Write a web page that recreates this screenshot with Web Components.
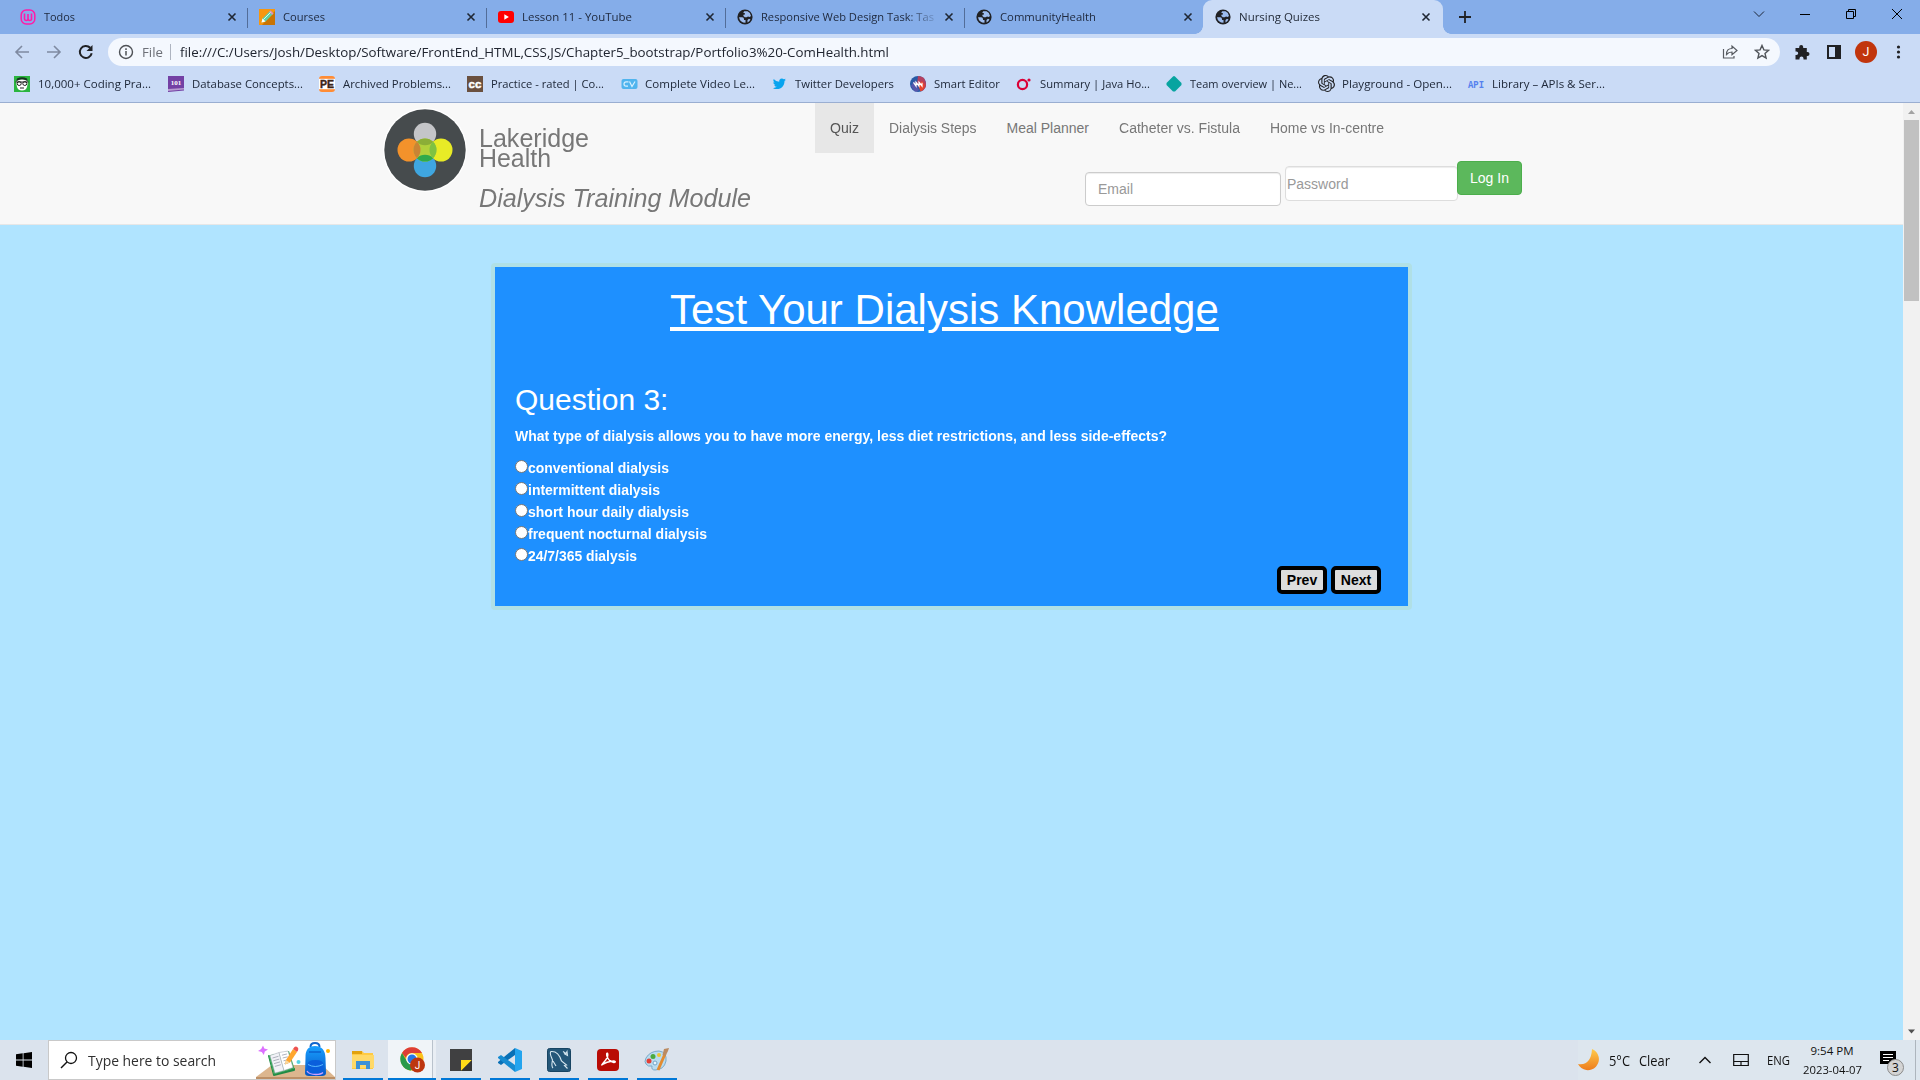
<!DOCTYPE html>
<html lang="en">
<head>
<meta charset="utf-8">
<title>Nursing Quizes</title>
<style>
html,body{margin:0;height:100%;overflow:hidden}
body{width:1920px;height:1080px;display:flex;flex-direction:column;background:#b0e4ff;font-family:"Liberation Sans",Arial,sans-serif}
</style>
</head>
<body>
<tab-strip></tab-strip>
<tool-bar></tool-bar>
<bookmark-bar></bookmark-bar>
<page-view>
  <site-nav></site-nav>
  <quiz-card heading="Test Your Dialysis Knowledge" question="Question 3:">
    <span slot="prompt"><fit-text t="What type of dialysis allows you to have more energy, less diet restrictions, and less side-effects?" w="652"></fit-text></span>
    <quiz-option t="conventional dialysis" w="141"></quiz-option>
    <quiz-option t="intermittent dialysis" w="132"></quiz-option>
    <quiz-option t="short hour daily dialysis" w="161"></quiz-option>
    <quiz-option t="frequent nocturnal dialysis" w="179"></quiz-option>
    <quiz-option t="24/7/365 dialysis" w="109"></quiz-option>
  </quiz-card>
</page-view>
<task-bar></task-bar>
<script>
const UI = '"Open Sans","Noto Sans",sans-serif';
const define = (name, render, after) => customElements.define(name, class extends HTMLElement {
  constructor(){ super(); this.attachShadow({mode:'open'}); }
  connectedCallback(){
    if (this.shadowRoot.firstChild) return;
    this.shadowRoot.innerHTML = render(k => this.getAttribute(k) || '');
    if (after) after(this);
  }
});
const svg = (w, h, body, vb) => `<svg width="${w}" height="${h}" viewBox="${vb || `0 0 ${w} ${h}`}" fill="none">${body}</svg>`;

const globe = svg(16,16,'<circle cx="8" cy="8" r="7.600" fill="#202124"/><path d="M2 8.200h3.200q1.800.1 1.800 1.900v.9h1.500v2.800Q3 13.600 2 8.200zM7.200 2.200h3.300q3 1.300 3.500 4.800l-1.300 1-1.700-.6-1.400.8H7.800L6.400 7V5.800l1.500-.2V4.200l-1.700-.5zM10.500 11l1.500-1.200 1.500.7q-1 2.200-3 3z" fill="#9dbcee"/>');
const ICON = {
  todo: svg(16,16,'<rect x="1.200" y="1" width="13.600" height="14" rx="5" stroke="#ff1ba8" stroke-width="1.500"/><path d="M4.500 4.500v5q0 2 1.800 2T8 9.500V5v4.500q0 2 1.800 2t1.700-2v-5" stroke="#ff1ba8" stroke-width="1.600"/>'),
  pencil: svg(16,16,'<path d="M0 0h16v16H0z" fill="#f7960f"/><path d="M16 2v14H3z" fill="#c97404"/><path d="m3.500 9.500 8-8 3 3-8 8-4 1z" fill="#5fd0a6"/><path d="m11.500 1.500 3 3-1.300 1.300-3-3z" fill="#e58ec0"/><path d="m4.500 10.500 7-7" stroke="#d9f8e8"/><path d="m3.500 9.500 3 3-4 1z" fill="#fff"/>'),
  yt: svg(16,16,'<rect y="2" width="16" height="12" rx="3" fill="#f00"/><path d="m6.300 5.300 4.600 2.700-4.600 2.700z" fill="#fff"/>'),
  globe,
  geek: svg(16,16,'<path d="M0 0h16v16H0z" fill="#2bb53f"/><path d="M2 6q1-4 6-4t6 4l-1 5q-1 3.500-5 3.500T3 11z" fill="#fff"/><path d="M2 6q1.500-2.500 6-2.500T14 6l-1-3.500Q8 0 3 2.500z" fill="#14351d"/><path d="M1.500 6h13M6 12h4" stroke="#222"/><circle cx="5.200" cy="7.500" r="2" stroke="#222"/><circle cx="10.800" cy="7.500" r="2" stroke="#222"/>'),
  db: svg(16,16,'<path d="M0 0h16v14.500L0 16z" fill="#7340a4"/><path d="m0 13 16-1v1.500L0 15z" fill="#b79bd0"/><text x="8" y="9" font-family="Liberation Serif" font-weight="700" font-size="7" fill="#fff" text-anchor="middle">101</text>'),
  pe: svg(16,16,'<rect width="16" height="16" rx="3" fill="#ff8c35"/><path d="M0 2.800h16v10.400H0z" fill="#fff"/><text x="8" y="12" font-family="Liberation Sans" font-weight="700" font-size="10.500" fill="#3b2418" stroke="#3b2418" stroke-width=".4" text-anchor="middle">PE</text>'),
  cc: svg(16,16,'<path d="M0 0h16v16H0z" fill="#6a503f"/><text x="8" y="11.500" font-family="Liberation Sans" font-weight="700" font-size="11.500" fill="#fff" stroke="#fff" stroke-width=".5" text-anchor="middle">cc</text>'),
  cv: svg(17,16,'<rect x=".5" y="3" width="16" height="10" rx="2" fill="#50b4ee"/><path d="M7.500 5.800H5q-2 0-2 2.200t2 2.200h2M8.500 5.500l2.500 5 3-5" stroke="#d6efff" stroke-width="1.200"/>'),
  tw: svg(16,16,'<g transform="translate(1.500 1.200) scale(.85)"><path d="M5.100 14c5.800 0 9-4.800 9-9v-.4A6 6 0 0 0 15.700 3l-1.800.5A3 3 0 0 0 15.300 1.700l-2 .8A3.200 3.200 0 0 0 7.900 5.400 9 9 0 0 1 1.400 2.100a3.200 3.200 0 0 0 1 4.200L1 5.900c0 1.500 1 2.800 2.500 3.100l-1.400.1a3.200 3.200 0 0 0 3 2.200A6.300 6.300 0 0 1 .4 12.600 9 9 0 0 0 5.100 14z" fill="#08a4ef"/></g>'),
  smart: svg(16,16,'<circle cx="8" cy="8" r="8" fill="#285aa6"/><path d="M8 0a8 8 0 0 1 3.500 15.200L7 8z" fill="#b5405f"/><path d="M12 5q6 6-1.500 10.500L8 9z" fill="#e8442c"/><path d="M4.500 4.500 9 14Q7 16.500 4.500 15.200L1 10z" fill="#6955ae" opacity=".7"/><path d="M3.500 6.300 6 10V6.300L9 10V6.300l3 3.700V6.800" stroke="#fff" stroke-width="1.200"/>'),
  o: svg(16,16,'<circle cx="6.500" cy="8.500" r="4.600" stroke="#db0037" stroke-width="2.200"/><circle cx="13" cy="4" r="1.600" fill="#db0037"/>'),
  dia: svg(16,16,'<path d="m8 0 1 .5 6.500 6.500v2L9 15.500H7L.5 9V7L7 .5z" fill="#08a4a0"/>'),
  ai: svg(17,17,'<path transform="scale(.7083)" fill="#202124" d="M22.280 9.820a5.980 5.980 0 0 0-.516-4.910 6.046 6.046 0 0 0-6.510-2.900A6.065 6.065 0 0 0 4.981 4.180a5.985 5.985 0 0 0-3.998 2.900 6.046 6.046 0 0 0 .743 7.097 5.980 5.980 0 0 0 .510 4.911 6.051 6.051 0 0 0 6.515 2.900A5.985 5.985 0 0 0 13.260 24a6.056 6.056 0 0 0 5.772-4.206 5.990 5.990 0 0 0 3.998-2.900 6.056 6.056 0 0 0-.747-7.073zM13.260 22.430a4.476 4.476 0 0 1-2.876-1.040l.141-.081 4.779-2.758a.795.795 0 0 0 .393-.681v-6.737l2.020 1.169a.071.071 0 0 1 .038.052v5.583a4.504 4.504 0 0 1-4.495 4.494zM3.600 18.304a4.471 4.471 0 0 1-.535-3.014l.142.085 4.783 2.759a.771.771 0 0 0 .781 0l5.843-3.369v2.332a.080.080 0 0 1-.033.062L9.740 19.950a4.499 4.499 0 0 1-6.140-1.646zM2.341 7.896a4.485 4.485 0 0 1 2.366-1.973V11.600a.766.766 0 0 0 .388.677l5.815 3.354-2.021 1.169a.076.076 0 0 1-.071 0l-4.830-2.787A4.504 4.504 0 0 1 2.341 7.896zm16.596 3.856-5.833-3.388L15.119 7.200a.076.076 0 0 1 .071 0l4.830 2.791a4.494 4.494 0 0 1-.676 8.105v-5.678a.790.790 0 0 0-.407-.666zm2.011-3.023-.142-.085-4.774-2.782a.776.776 0 0 0-.785 0L9.409 9.230V6.897a.066.066 0 0 1 .028-.061l4.830-2.787a4.499 4.499 0 0 1 6.681 4.660zM8.307 12.863l-2.020-1.164a.080.080 0 0 1-.038-.057V6.075a4.499 4.499 0 0 1 7.376-3.454l-.142.081-4.778 2.758a.795.795 0 0 0-.393.682zm1.097-2.365 2.602-1.500 2.607 1.500v2.999l-2.597 1.500-2.607-1.500z"/>'),
  api: svg(17,16,'<text x="0" y="12" font-family="Liberation Mono" font-weight="700" font-size="11" textLength="16" lengthAdjust="spacingAndGlyphs" fill="#5580ee">API</text>').replace('<svg','<svg style="overflow:visible"')
};

define('chrome-tab', a => `<style>
:host{display:flex;align-items:center;box-sizing:border-box;width:239px;height:34px;padding:0 7px 0 12px;position:relative;flex:none;font:11.500px ${UI};color:#202b40}
:host([active]){background:#cadbf6;border-radius:9px 9px 0 0;width:240px;padding-right:9px;color:#1f2734}
svg{display:block;flex:none}.l{margin-left:8px;width:176px;line-height:18px}
:host([fade]) .l{-webkit-mask-image:linear-gradient(90deg,#000 145px,transparent 180px)}
.x{margin-left:auto}
:host([rule])::after{content:"";position:absolute;right:-1px;top:8px;width:1px;height:20px;background:#526d99}
:host([active])::before,:host([active])::after{content:"";position:absolute;bottom:0;width:8px;height:8px}
:host([active])::before{left:-8px;background:radial-gradient(circle at 0 0,transparent 7.500px,#cadbf6 8px)}
:host([active])::after{right:-8px;background:radial-gradient(circle at 100% 0,transparent 7.500px,#cadbf6 8px)}
</style>${ICON[a('icon')]}<div class="l"><fit-text t="${a('t')}" w="${a('w')}"></fit-text></div>${svg(16,16,'<path d="m4.500 4.500 7 7m0-7-7 7" stroke="#1f2734" stroke-width="1.600"/>').replace('<svg','<svg class="x"')}`);

define('tab-strip', () => `<style>
:host{display:flex;height:34px;background:#85ade9;flex:none;padding-left:8px}
.new{margin:9px 0 0 14px}.win{display:flex;margin-left:auto;gap:30px;padding:6px 15px 0 0}
</style>
<chrome-tab rule icon="todo" t="Todos" w="31"></chrome-tab><chrome-tab rule icon="pencil" t="Courses" w="42"></chrome-tab><chrome-tab rule icon="yt" t="Lesson 11 - YouTube" w="110"></chrome-tab><chrome-tab rule fade icon="globe" t="Responsive Web Design Task: Tas" w="173"></chrome-tab><chrome-tab icon="globe" t="CommunityHealth" w="96"></chrome-tab><chrome-tab active icon="globe" t="Nursing Quizes" w="81"></chrome-tab>
${svg(16,16,'<path d="M8 2v12M2 8h12" stroke="#202124" stroke-width="1.800"/>').replace('<svg','<svg class="new"')}
<div class="win">${svg(16,16,'<path d="m3 5.500 5 5 5-5" stroke="#1c2638"/>')}${svg(16,16,'<path d="M3 8.500h10" stroke="#000"/>')}${svg(16,16,'<path d="M3.500 5.500h7v7h-7zM5.500 5.500v-2h7v7h-2" stroke="#000"/>')}${svg(16,16,'<path d="m3 3 10 10m0-10L3 13" stroke="#000"/>')}</div>`);

define('tool-bar', () => `<style>
:host{display:flex;height:36px;background:#cadbf6;flex:none;align-items:center;box-sizing:border-box;padding:0 14px;font:13.500px ${UI};color:#202530}
.n{display:flex;gap:16px;width:94px}.o{display:flex;align-items:center;height:28px;box-sizing:border-box;width:1672px;border-radius:14px;background:#f4f8fe;padding:0 10px;line-height:28px}
.i{color:#6d7078;margin-left:8px}.s{width:1px;height:16px;background:#aeb4c0;margin:0 9px 0 7px}.r{display:flex;gap:16px;margin-left:auto}
.m{display:flex;align-items:center;gap:16px;margin-left:14px}.av{width:22px;height:22px;border-radius:50%;background:#c1350d;color:#fff;text-align:center;font:12.500px/22px Roboto,sans-serif;margin:0 -3px}
svg{display:block;flex:none}</style>
<div class="n">${svg(16,16,'<path d="M15 8H2m6-6L2 8l6 6" stroke="#7f8aa1" stroke-width="1.600"/>')}${svg(16,16,'<path d="M1 8h13M8 2l6 6-6 6" stroke="#7f8aa1" stroke-width="1.600"/>')}${svg(16,16,'<path d="M13.700 9.200A6 6 0 1 1 12.200 3.800" stroke="#202124" stroke-width="2"/><path d="M14.500 1v6h-6z" fill="#202124"/>')}</div>
<div class="o">${svg(16,16,'<circle cx="8" cy="8" r="6.500" stroke="#4e5156" stroke-width="1.400"/><path d="M8 7v4.500M8 4.300v1.600" stroke="#4e5156" stroke-width="1.500"/>')}<fit-text class="i" t="File" w="21"></fit-text><span class="s"></span><fit-text t="file:///C:/Users/Josh/Desktop/Software/FrontEnd_HTML,CSS,JS/Chapter5_bootstrap/Portfolio3%20-ComHealth.html" w="709"></fit-text>
<div class="r">${svg(16,16,'<path d="M1.500 5v9h10.500v-2M4.500 10.500c0-4 2-6 5.500-6V2l5 4.500-5 4.300V8c-2.500 0-4 .8-5.500 2.500z" stroke="#575b61" stroke-width="1.200"/>')}${svg(16,16,'<path d="m8 1.500 1.900 4.400 4.600.4-3.500 3.100 1.100 4.700L8 11.600l-4.100 2.500L5 9.400 1.500 6.300l4.600-.4z" stroke="#50545a" stroke-width="1.400"/>')}</div></div>
<div class="m">${svg(16,16,'<path d="M1.500 4h3.700V3a2 2 0 0 1 4 0v1h3.600v4h.7a2 2 0 0 1 0 4h-.7v3.500H9.500v-1a2 2 0 0 0-4 0v1h-4V11h.9a1.800 1.800 0 0 0 0-3.600h-.9z" fill="#202124"/>')}${svg(16,16,'<path d="M2 2h12v12H2z" stroke="#202124" stroke-width="2"/><path d="M9 2h5v12H9z" fill="#202124"/>')}<div class="av">J</div>${svg(16,16,'<circle cx="8.500" cy="3" r="1.600" fill="#202124"/><circle cx="8.500" cy="8" r="1.600" fill="#202124"/><circle cx="8.500" cy="13" r="1.600" fill="#202124"/>')}</div>`);

define('bookmark-item', a => `<style>:host{display:flex;align-items:center;flex:none;gap:7px;width:${a('span')}px;font:11.500px/18px ${UI};color:#202a3b}.i{width:17px;display:flex}svg{display:block}</style><div class="i">${ICON[a('icon')]}</div><fit-text t="${a('t')}" w="${a('w')}"></fit-text>`);

define('bookmark-bar', () => `<style>:host{display:flex;height:33px;box-sizing:border-box;background:#cadbf6;border-bottom:1px solid #9aaed1;flex:none;padding:0 0 5px 14px;align-items:center}</style>` +
 [['geek','10,000+ Coding Pra...',113,154],['db','Database Concepts...',111,151],['pe','Archived Problems...',108,148],['cc','Practice - rated | Co...',113,154],['cv','Complete Video Le...',110,150],['tw','Twitter Developers',99,139],['smart','Smart Editor',66,106],['o','Summary | Java Ho...',110,150],['dia','Team overview | Ne...',112,152],['ai','Playground - Open...',110,150],['api','Library – APIs & Ser...',113,150]]
 .map(b => `<bookmark-item icon="${b[0]}" t="${b[1].replace('&','&amp;')}" w="${b[2]}" span="${b[3]}"></bookmark-item>`).join(''));

define('scroll-bar', () => `<style>:host{display:flex;flex-direction:column;width:17px;background:#f1f1f1;flex:none;align-items:center}.t{width:15px;height:181px;background:#c1c1c1;margin-bottom:auto}svg{display:block}</style>
${svg(17,17,'<path d="m5 11 3.500-4 3.500 4z" fill="#a3a3a3"/>')}<div class="t"></div>${svg(17,17,'<path d="m5 6.500 3.500 4 3.500-4z" fill="#505050"/>')}`);

define('page-view', () => `<style>:host{display:flex;height:937px;flex:none}.p{width:1903px;display:flex;flex-direction:column}</style><div class="p"><slot></slot></div><scroll-bar></scroll-bar>`);

define('lakeridge-logo', () => `<style>:host{display:block;width:84px;height:84px}svg{display:block}</style>${svg(84,84,`
<defs><clipPath id="t"><circle cx="42" cy="26" r="11.200"/></clipPath><clipPath id="l"><circle cx="26" cy="42" r="11.500"/></clipPath><clipPath id="r"><circle cx="58" cy="42" r="11.500"/></clipPath><clipPath id="b"><circle cx="42" cy="58" r="11.200"/></clipPath></defs>
<circle cx="42" cy="42" r="42" fill="#fff"/><circle cx="42" cy="42" r="40.700" fill="#464b4d"/>
<circle cx="42" cy="26" r="11.200" fill="#c4c5c8"/><circle cx="26" cy="42" r="11.500" fill="#f3922b"/><circle cx="58" cy="42" r="11.500" fill="#e8eb26"/><circle cx="42" cy="58" r="11.200" fill="#3fa6e0"/>
<circle cx="42" cy="42" r="11.500" fill="#b1d13c"/>
<circle cx="42" cy="42" r="11.500" fill="#8bae37" clip-path="url(#t)"/><circle cx="42" cy="42" r="11.500" fill="#2eaa4b" clip-path="url(#b)"/><circle cx="42" cy="42" r="11.500" fill="#c98434" clip-path="url(#l)"/><circle cx="42" cy="42" r="11.500" fill="#7fc241" clip-path="url(#r)"/>`)}`);

define('nav-link', a => `<style>:host{display:block;padding:0 15px;font-size:14px;line-height:50px;color:#777}:host([active]){background:#e7e7e7;color:#555}</style><fit-text t="${a('t')}" w="${a('w')}"></fit-text>`);

define('site-nav', () => `<style>
:host{display:flex;height:122px;box-sizing:border-box;background:#f8f8f8;border-bottom:1px solid #e7e7e7;padding-left:383px;flex:none}
lakeridge-logo{margin-top:5px}.b{margin-left:12px;width:336px;color:#777;font-size:25px;line-height:20px;padding-top:25px}
.m{font-style:italic;margin-top:20px}.n{display:flex}.f{display:flex;align-items:flex-start;padding:8px 0 0 270px;font-size:14px}
input{box-sizing:border-box;margin:0;font:14px "Liberation Sans",Arial,sans-serif;background:#fff;border-radius:4px;outline:0}
input::placeholder{color:#999;opacity:1}
.e{width:196px;height:34px;margin-top:11px;padding:6px 12px;border:1px solid #ccc;box-shadow:inset 0 1px 1px rgba(0,0,0,.075)}
.p{width:173px;height:35px;margin:5px 0 0 4px;padding:1px;border:1px solid #ddd;box-shadow:inset 0 1px 1px rgba(0,0,0,.075)}
button{box-sizing:border-box;width:65px;height:34px;margin-left:-1px;padding:0;background:#5cb85c;border:1px solid #4cae4c;border-radius:4px;color:#fff;font:14px "Liberation Sans",Arial,sans-serif}
</style><lakeridge-logo></lakeridge-logo>
<div class="b"><fit-text t="Lakeridge" w="110"></fit-text><fit-text t="Health" w="72"></fit-text><fit-text class="m" t="Dialysis Training Module" w="272"></fit-text></div>
<div><div class="n"><nav-link active t="Quiz" w="29"></nav-link><nav-link t="Dialysis Steps" w="87.500"></nav-link><nav-link t="Meal Planner" w="82.500"></nav-link><nav-link t="Catheter vs. Fistula" w="121"></nav-link><nav-link t="Home vs In-centre" w="114"></nav-link></div>
<div class="f"><input class="e" placeholder="Email"><input class="p" placeholder="Password"><button>Log In</button></div></div>`);

define('quiz-option', a => `<style>:host{display:flex;height:22px;line-height:22px}i{width:11px;height:11px;border:1px solid #767676;border-radius:50%;background:#fff;margin:2.500px 0 0}</style><i></i><fit-text t="${a('t')}" w="${a('w')}"></fit-text>`);

define('quiz-card', a => `<style>
:host{display:block;box-sizing:border-box;width:921px;height:347px;margin:38px 0 0 491px;border:4px solid #b0e0e6;border-radius:4px;background:#1e90ff;color:#fff;font-weight:700;font-size:14px;padding:0 20px;flex:none}
.h{font-weight:400;font-size:42px;line-height:48px;padding:19px 0 0 155px}
.h span{display:inline-block;text-decoration:underline 4px;text-underline-offset:3px}
.q{font-weight:400;font-size:30px;line-height:34px;margin-top:49px}
.t{line-height:20px;margin:9px 0 11px}
.b{display:flex;justify-content:flex-end;gap:4px;margin:-1px 7px 0 0}
button{box-sizing:border-box;width:50px;height:28px;border:4px solid #000;border-radius:5px;background:#ddd;color:#000;padding:0;font:700 14px "Liberation Sans",Arial,sans-serif}
</style><div class="h"><span>${a('heading')}</span></div><div class="q">${a('question')}</div><div class="t"><slot name="prompt"></slot></div><slot></slot><div class="b"><button>Prev</button><button>Next</button></div>`,
 el => { const s = el.shadowRoot.querySelector('.h span'); s.style.fontSize = (42*549/s.getBoundingClientRect().width)+'px'; });

define('task-item', a => `<style>:host{display:flex;flex-direction:column;width:${a('w')||40}px;height:40px;flex:none;align-items:center;margin-right:9px;box-sizing:border-box;background:${a('bg')||'none'}}.i{flex:1;display:flex;align-items:center;padding-top:2px;box-sizing:border-box;height:38px}.u{height:2px;width:100%;background:#0078d7}</style><div class="i"><slot></slot></div><div class="u"></div>`);

define('search-box', () => `<style>:host{display:flex;align-items:center;box-sizing:border-box;width:288px;height:40px;border:1px solid #c9c9c9;background:#fff;padding-left:11px;font:14.800px ${UI};color:#303030;margin-left:16px}fit-text{margin-left:10px}.a{margin-left:auto}svg{display:block;flex:none}</style>
${svg(18,18,'<circle cx="11" cy="7" r="5.500" stroke="#111" stroke-width="1.300"/><path d="M7 11 1 17" stroke="#111" stroke-width="1.400"/>')}<fit-text t="Type here to search" w="128"></fit-text>
${svg(79,38,`<defs><linearGradient id="k" x2="0" y2="1"><stop stop-color="#18a0ff"/><stop offset="1" stop-color="#0757c7"/></linearGradient></defs>
<path d="M0 38v-2l16-12h50l13 12v2z" fill="#dcb68e"/><path d="M0 36h79v2H0z" fill="#bd9066"/>
<path d="M12 15q0-1 1-1l5 19 21-6v2q0 1-1 1l-20 5q-1 0-1-1z" fill="#1f8a45"/><path d="M12.500 14.500 33 10l5.500 17.500-20.500 6z" fill="#39a95b"/>
<path d="m14 14.500 9-3 5 18-9 2.500z" fill="#f2f2f7" stroke="#a3a6b3" stroke-width=".5"/><path d="m23 11.500 9-1.500 5 16.500-9 3z" fill="#fff" stroke="#a3a6b3" stroke-width=".5"/>
<path d="m16.500 17 6-1.700m-5.200 4.500 6-1.700m-5.200 4.500 6-1.700m-5.200 4.500 6-1.700m1-9.500 5-1.200m-4.200 4 5-1.200m-4.200 4 5-1.200m-4.200 4 5-1.200" stroke="#9b9eac" stroke-width=".8"/>
<path d="m30 19 7-11 4 3-7 10.500-5 2z" fill="#ffa62e"/><path d="m37 8 1.500-2q1.500-1 3 .3t.5 3L41 11z" fill="#ee5350"/><path d="m29 23.500.8-4.500 4 2.500z" fill="#f7d7a0"/>
<path d="M54.500 6q0-4 4.500-4t4.500 4" stroke="#1266cc" stroke-width="2"/><path d="M49.500 17Q49 5 59 5t10.500 12l.5 15q0 3-4 3H53q-4 0-4-3z" fill="url(#k)"/><path d="M53 11h12" stroke="#0a62cf" stroke-width="1.500"/><path d="M51.500 24q0-5 8-5t8 5v7q-2 2.500-8 2.500t-8-2.500z" fill="#0a5fdc"/><path d="M52 23.500q7 4 15 0" stroke="#58bbff"/><path d="M51 30q2 3.500 9 3.500 5 0 7-2" stroke="#cfa0ff" stroke-width="1.300"/>
<path d="m7 4.500 1.300 3 3.700 1-3.200 2-1 3.500-2-3-3.800-1 3.200-2z" fill="#dc70ff"/><circle cx="72" cy="10" r="2" fill="#ffb400"/><circle cx="42.500" cy="21" r="2" fill="#54d2e5"/>`).replace('<svg','<svg class="a"')}`);

define('task-bar', () => `<style>
:host{display:flex;height:40px;background:#dbe3ed;flex:none;color:#111;font:14px ${UI}}
svg{display:block}.w{margin:12px 0 0 16px}.apps{display:flex;margin-left:7px}.tray{display:flex;align-items:center;margin-left:auto;line-height:19px;background:#dde6ee}
.clock{display:flex;flex-direction:column;align-items:center;width:60px;font-size:11.500px;margin-left:12px}.n{position:relative;margin-left:17px;width:26px;height:30px}
.n svg{position:absolute;left:1px;top:6px}.n b{position:absolute;left:8px;top:14px;width:15px;height:15px;border-radius:50%;background:#d4d4d4;border:1px solid #8b8b8b;font:12px/15px ${UI};text-align:center}
.end{width:4px;height:40px;border-left:1px solid #adb5bd;margin-left:10px}
</style>
${svg(16,16,'<path d="M0 2.200 6.700 1.300v6.300H0zM7.500 1.200 16 0v7.600H7.500zM0 8.400h6.700v6.300L0 13.800zM7.500 8.400H16V16l-8.500-1.200z" fill="#000"/>').replace('<svg','<svg class="w"')}
<search-box></search-box>
<div class="apps">
<task-item>${svg(22,20,'<path d="M0 1h10l2 2h9v16H0z" fill="#ffca42"/><path d="M0 1h10v3H0z" fill="#e2a20d"/><path d="M0 5h22v13H0z" fill="#ffd968"/><path d="M4 11h14v8h-4v-4H8v4H4z" fill="#3c91d8"/>')}</task-item>
<task-item w="48" bg="linear-gradient(90deg,#f0f4f8 44px,#b9c2cc 44px,#b9c2cc 45px,#e9eef4 45px)" style="margin:0 5px 0 -4px">${svg(26,26,'<circle cx="13" cy="12" r="11.500" fill="#fbc11a"/><path d="M3 6A11.500 11.500 0 0 1 23 6H13q-5 0-6 5z" fill="#de3d36"/><path d="M3 6a11.500 11.500 0 0 0 9 17.500L18 15l-9 1z" fill="#2a9a4a"/><circle cx="13" cy="12" r="5.800" fill="#fff"/><circle cx="13" cy="12" r="4.500" fill="#2877e6"/><circle cx="18.500" cy="18" r="7.500" fill="#bd3610"/><text x="18.500" y="21.500" text-anchor="middle" font-family="Roboto" font-size="10" fill="#fff">J</text>')}</task-item>
<task-item>${svg(22,22,'<path d="M0 0h22v22H0z" fill="#404041"/><path d="M11 11h11L11 22z" fill="#ffda18"/><path d="M22 11v11H11z" fill="#343434"/>')}</task-item>
<task-item>${svg(24,24,'<path d="M17 0v7L3 17l-3-2v-1z" fill="#0870b6"/><path d="M17 24v-7L3 7 0 9v1z" fill="#168bd1"/><path d="M17 0 24 3v18l-7 3z" fill="#23a4ee"/>')}</task-item>
<task-item>${svg(24,24,'<rect x=".5" y=".5" width="23" height="23" rx="2" fill="#245779" stroke="#184563"/><path d="M6 20c-2-2-1-5-.5-8C4 8 2 5 4 3.500 10 3 13 8 14.500 13l5 4-2 .5 3 3M6 13l3 5M16 3.500l3 2 1-2 .500 4-3.500-2" stroke="#d6e7ef" stroke-width="1.100"/>')}</task-item>
<task-item>${svg(22,22,'<rect width="22" height="22" rx="4" fill="#b90c05"/><path d="M4.500 16.500c2-3.500 6-6 6.300-10.500 0-3-1.500-2-1 .5.700 3.300 3.500 6.500 7 7 2.500.2 1.500-2-1-1.500-4 .4-7.500 1.500-10.800 3.500" stroke="#fff" stroke-width="1.500"/>')}</task-item>
<task-item>${svg(26,24,'<path d="M2 10q4-7 13-7 8 1 7 10-2 9-11 9-4 0-3-4-4 1-6-2-2-2 0-6z" fill="#b9dcef" stroke="#7ba9c8"/><circle cx="5" cy="13" r="2.500" fill="#e33e35"/><circle cx="9" cy="8.500" r="2.500" fill="#4baa3e"/><circle cx="15" cy="7" r="2" fill="#f0c431"/><circle cx="11" cy="15" r="2" fill="#e8f5fc" stroke="#73a4c5"/><path d="m14 22 7-16" stroke="#e28b30" stroke-width="3"/><path d="m18.500 7 1.500-6 5-1-1 3-2.500 5z" fill="#bb8a60"/>')}</task-item>
</div>
<div class="tray">${svg(22,22,'<defs><linearGradient id="m" x2="0" y2="1"><stop stop-color="#ffcb4b"/><stop offset="1" stop-color="#ed7c1c"/></linearGradient></defs><path d="M14 0a11 11 0 1 1-14 15q13 2 14-15z" fill="url(#m)"/>')}
<fit-text style="margin-left:9px" t="5°C" w="21"></fit-text><fit-text style="margin-left:9px" t="Clear" w="31"></fit-text>
${svg(14,14,'<path d="m1.500 10 5.500-5.500 5.500 5.500" stroke="#111" stroke-width="1.400"/>').replace('<svg','<svg style="margin-left:28px"')}
${svg(16,14,'<path d="M.7 1.500h14.600v11H.7zM.7 8.500h14.600M8 8.500v4" stroke="#111" stroke-width="1.200"/>').replace('<svg','<svg style="margin-left:21px"')}
<fit-text style="margin-left:18px;font-size:12px" t="ENG" w="23"></fit-text>
<div class="clock"><fit-text t="9:54 PM" w="43"></fit-text><fit-text t="2023-04-07" w="59"></fit-text></div>
<div class="n">${svg(16,16,'<path d="M0 0h16v13h-3v3l-3-3H0z" fill="#000"/><path d="M3 3.500h10M3 6.500h10M3 9.500h6" stroke="#fff"/>')}<b>3</b></div><div class="end"></div></div>`);

/* A single line of text set to an exact width. Registered last, so that it measures in its final font. */
define('fit-text', a => `<style>:host{display:block;flex:none;width:${a('w')}px;white-space:nowrap}
span{display:inline-block;transform-origin:0 50%}</style><span>${a('t').replace(/&/g,'&amp;')}</span>`, el => {
  const s = el.shadowRoot.querySelector('span');
  const m = s.getBoundingClientRect().width;
  if (m) s.style.transform = `scaleX(${+el.getAttribute('w') / m})`;
});
</script>
</body>
</html>
